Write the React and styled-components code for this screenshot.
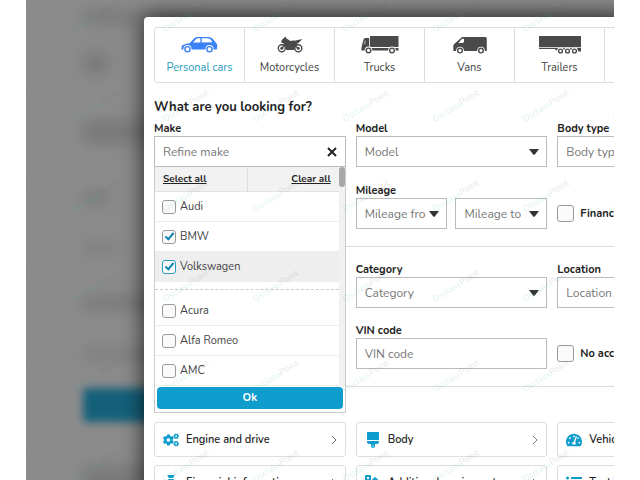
import { useState } from "react";
import styled, { createGlobalStyle, css } from "styled-components";
import {
  FaBrush,
  FaCogs,
  FaListUl,
  FaSwatchbook,
  FaTachometerAlt,
} from "react-icons/fa";
import { FaSackDollar } from "react-icons/fa6";

const Wheel = ({ cx, cy, r = 3 }) => (
  <g>
    <circle cx={cx} cy={cy} r={r + 0.8} fill="#fff" />
    <circle cx={cx} cy={cy} r={r - 0.7} fill="none" stroke="currentColor" strokeWidth="1.4" />
  </g>
);

const CarIcon = () => (
  <svg width="37" height="18" viewBox="0 0 37 18" fill="currentColor">
    <path d="M1 9.400C3 8.200 6 7.600 8.600 7.200L13 2.400C14.300 1.200 15.600 1 17.400 1h8.200c2.600 0 4.400.4 5.800 1.600L35 6.800c1 1.200 1.400 2.400 1.300 3.800l-.3 2.200c-.1.5-.5.7-1 .7H1.400C.6 13.500.4 13 .4 12.400z" />
    <path d="M12 6.600 15 3.300C15.600 2.600 16.200 2.300 17 2.300h2.400v4.300zM20.800 2.300h4.600c1.900 0 3.200.3 4.200 1.200l1.900 2.700-10.700.4z" fill="#fff" />
    <Wheel cx={6.500} cy={13.200} r={3.300} />
    <Wheel cx={28.500} cy={13.200} r={3.300} />
  </svg>
);

const MotorcycleIcon = () => (
  <svg width="26" height="18" viewBox="0 0 26 18" fill="currentColor">
    <path d="M4.600 4.200 7.400 1.400 8.800.6l.4 1.600 4.200 2.900c1.300-.7 2.600-.8 4-.3L25.400 3l-3.400 3.400-2 1.400 2 1.600-2.800 3.200-2 1.400H9.400L8.200 9.800 6 12.800 4.400 12 7 7.600 4.200 6.600z" />
    <circle cx="4.800" cy="12.200" r="3.500" fill="#fff" stroke="currentColor" strokeWidth="1.400" />
    <circle cx="4.800" cy="12.200" r="1.500" />
    <circle cx="21.300" cy="12.200" r="3.500" fill="#fff" stroke="currentColor" strokeWidth="1.400" />
    <circle cx="21.300" cy="12.200" r="1.500" />
    <path d="M8.200 6.500 5.300 12.500M17 9.500l4.300 2.700" stroke="currentColor" strokeWidth="1.400" />
  </svg>
);

const TruckIcon = () => (
  <svg width="38" height="18" viewBox="0 0 38 18" fill="currentColor">
    <path d="M9 0h28.500v11H9z" />
    <path d="M2.600 3.200C3 2.400 4 2 5 2h3.200v10h29.300v2.600H1C.4 14.600.2 14.200.3 13.600L.8 10z" />
    <path d="M2.500 8.400 3.400 4.400h1.800L4.400 8.400z" fill="#888" />
    <Wheel cx={7.500} cy={14.400} />
    <Wheel cx={31} cy={14.400} />
  </svg>
);

const VanIcon = () => (
  <svg width="34" height="18" viewBox="0 0 34 18" fill="currentColor">
    <path d="M8 2C8.500 1.300 9 1 10 1h22c1.200 0 1.800.6 1.800 1.800v11.400c0 .6-.4.900-1 .9H1.200C.6 15.100.3 14.800.3 14.200V10c0-.8.300-1.400.9-2z" />
    <path d="M5.400 7 9 2.800h2v3.400L9.200 7z" fill="#fff" />
    <Wheel cx={7} cy={14.600} />
    <Wheel cx={28} cy={14.600} />
  </svg>
);

const TrailerIcon = () => (
  <svg width="42" height="18" viewBox="0 0 42 18" fill="currentColor">
    <path d="M0 0h42v11.200H0zM0 12h42v1H0zM16 13h26v2.400h-2.400L38 14H18l-.6.800z" />
    <Wheel cx={21.500} cy={15} r={2.600} />
    <Wheel cx={28.500} cy={15} r={2.600} />
    <Wheel cx={35.500} cy={15} r={2.600} />
  </svg>
);

const CaretDown = () => (
  <svg width="10" height="6" viewBox="0 0 10 6" fill="#333">
    <path d="M0 0h10L6 5.200a1.300 1.300 0 0 1-2 0z" />
  </svg>
);

const ChevronRight = () => (
  <svg width="6" height="10" viewBox="0 0 6 10" fill="none" stroke="#777">
    <path d="M1 1l4 4-4 4" />
  </svg>
);

const CloseIcon = () => (
  <svg width="10" height="10" viewBox="0 0 10 10" stroke="#222" strokeWidth="2">
    <path d="M1 1l8 8M9 1L1 9" />
  </svg>
);

const categories = [
  { name: "Personal cars", icon: <CarIcon /> },
  { name: "Motorcycles", icon: <MotorcycleIcon /> },
  { name: "Trucks", icon: <TruckIcon /> },
  { name: "Vans", icon: <VanIcon /> },
  { name: "Trailers", icon: <TrailerIcon /> },
];

const topMakes = ["Audi", "BMW", "Volkswagen"];
const allMakes = ["Acura", "Alfa Romeo", "AMC"];

const groups = [
  { name: "Engine and drive", icon: <FaCogs /> },
  { name: "Body", icon: <FaBrush /> },
  { name: "Vehicle condition", icon: <FaTachometerAlt /> },
  { name: "Financial information", icon: <FaSackDollar /> },
  { name: "Additional equipment", icon: <FaSwatchbook /> },
  { name: "Text search", icon: <FaListUl /> },
];

function SelectField({ label, name }) {
  return (
    <Field>
      <Label htmlFor={name}>{label}</Label>
      <SelectBox id={name} text={label} />
    </Field>
  );
}

function SelectBox({ id, text, label }) {
  return (
    <SelectWrap>
      <Select id={id} aria-label={label}>
        <option>{text}</option>
      </Select>
      <Caret>
        <CaretDown />
      </Caret>
    </SelectWrap>
  );
}

function MakeField() {
  const [checked, setChecked] = useState(["BMW", "Volkswagen"]);

  const toggle = (make) =>
    setChecked(
      checked.includes(make)
        ? checked.filter((item) => item !== make)
        : [...checked, make]
    );

  const renderMake = (make) => (
    <MakeRow key={make} $active={make === "Volkswagen"}>
      <Checkbox
        type="checkbox"
        $active={make === "Volkswagen"}
        checked={checked.includes(make)}
        onChange={() => toggle(make)}
      />
      {make}
    </MakeRow>
  );

  return (
    <Field>
      <Label htmlFor="make">Make</Label>
      <MakeBox>
        <TextInput id="make" placeholder="Refine make" />
        <ClearButton type="button" aria-label="Close">
          <CloseIcon />
        </ClearButton>
        <Menu>
          <MenuBody>
            <MenuList>
              <MenuHead>
                <MenuLink
                  type="button"
                  onClick={() => setChecked([...topMakes, ...allMakes])}
                >
                  Select all
                </MenuLink>
                <MenuLink type="button" $right onClick={() => setChecked([])}>
                  Clear all
                </MenuLink>
              </MenuHead>
              {topMakes.map(renderMake)}
              <Separator />
              {allMakes.map(renderMake)}
            </MenuList>
            <ScrollTrack>
              <ScrollThumb />
            </ScrollTrack>
          </MenuBody>
          <OkButton type="button">Ok</OkButton>
        </Menu>
      </MakeBox>
    </Field>
  );
}

function Watermark() {
  return (
    <WatermarkLayer aria-hidden="true">
      <defs>
        <pattern id="mark" x="24" y="-30" width="90" height="90" patternUnits="userSpaceOnUse">
          <text x="45" y="49" textAnchor="middle" transform="rotate(-32 45 45)">
            <tspan fill="#1fb89a" fillOpacity="0.16">Osclass</tspan>
            <tspan fill="#555" fillOpacity="0.16">Point</tspan>
          </text>
        </pattern>
      </defs>
      <rect width="100%" height="100%" fill="url(#mark)" />
    </WatermarkLayer>
  );
}

function App() {
  return (
    <Page>
      <GlobalStyle />
      <Stage>
        <Backdrop>
          <Blob $height={14} $gap={28} />
          <Blob $height={22} $width={26} $gap={46} />
          <Blob $height={24} $gap={48} />
          <Blob $height={12} $width={26} $gap={40} />
          <Blob $height={8} $width={34} $gap={44} />
          <Blob $height={14} $gap={40} />
          <Blob $height={8} $gap={30} />
          <Blob $height={34} $gap={44} $accent />
          <Blob $height={24} />
        </Backdrop>
        <Modal>
          <Tabs>
            {categories.map((category, index) => (
              <Tab type="button" key={category.name} $active={index === 0}>
                <TabIcon $active={index === 0}>{category.icon}</TabIcon>
                {category.name}
              </Tab>
            ))}
          </Tabs>

          <Title>What are you looking for?</Title>

          <Section>
            <MakeField />
            <SelectField label="Model" name="model" />
            <SelectField label="Body type" name="body" />
            <Field />
            <Field>
              <Label htmlFor="mileage">Mileage</Label>
              <Pair>
                <SelectBox id="mileage" text="Mileage from" />
                <SelectBox text="Mileage to" label="Mileage to" />
              </Pair>
            </Field>
            <CheckField>
              <Checkbox type="checkbox" $large />
              Financing
            </CheckField>
          </Section>

          <Section $lower>
            <Field />
            <SelectField label="Category" name="category" />
            <Field>
              <Label htmlFor="location">Location</Label>
              <TextInput id="location" placeholder="Location" />
            </Field>
            <Field />
            <Field>
              <Label htmlFor="vin">VIN code</Label>
              <TextInput id="vin" placeholder="VIN code" />
            </Field>
            <CheckField>
              <Checkbox type="checkbox" $large />
              No accident
            </CheckField>
          </Section>

          <Groups>
            {groups.map((group) => (
              <GroupButton type="button" key={group.name}>
                <GroupIcon>{group.icon}</GroupIcon>
                <GroupName>{group.name}</GroupName>
                <ChevronRight />
              </GroupButton>
            ))}
          </Groups>
        </Modal>
        <Watermark />
      </Stage>
    </Page>
  );
}

export default App;

const GlobalStyle = createGlobalStyle`
  * {
    box-sizing: border-box;
  }
  body {
    margin: 0;
    background: #fff;
    color: #222;
    font-family: Nunito, Lato, "Open Sans", sans-serif;
    font-size: 11px;
    line-height: 16px;
  }
  button, input, select {
    font: inherit;
    color: inherit;
  }
`;

const Page = styled.div`
  padding: 0 26px;
`;
const Stage = styled.main`
  position: relative;
  display: flex;
  height: 100vh;
  padding: 17px 0 0 118px;
  overflow: hidden;
  background: #8b8b8b;
`;
const Backdrop = styled.div`
  position: absolute;
  inset: 0;
  padding: 10px 0 0 57px;
`;
const Blob = styled.div`
  width: ${(props) => (props.$width ? props.$width + "px" : "100%")};
  height: ${(props) => props.$height}px;
  margin-bottom: ${(props) => props.$gap || 0}px;
  border-radius: 4px;
  background: ${(props) => (props.$accent ? "#14607a" : "#7a7a7a")};
  filter: blur(${(props) => (props.$accent ? 4 : 7)}px);
`;
const Modal = styled.div`
  position: relative;
  flex: 1 0 615px;
  min-width: 0;
  height: max-content;
  padding: 10px;
  border-radius: 4px;
  background: #fff;
  box-shadow: 0 0 22px rgba(0, 0, 0, 0.75);
`;

const Tabs = styled.nav`
  display: flex;
  height: 56px;
  border: 1px solid #ddd;
  border-radius: 3px;
`;
const Tab = styled.button`
  flex: 0 0 90px;
  display: flex;
  flex-direction: column;
  align-items: center;
  padding: 8px 0 0;
  border: 0;
  border-right: 1px solid #ddd;
  background: none;
  white-space: nowrap;
  cursor: pointer;
  color: ${(props) => (props.$active ? "#2a9cc0" : "#444")};
`;
const TabIcon = styled.span`
  display: flex;
  height: 18px;
  margin-bottom: 6px;
  color: ${(props) => (props.$active ? "#3b82f6" : "#4a4a4a")};
`;

const Title = styled.h2`
  margin: 14px 0 3px;
  font-size: 13px;
  font-weight: 700;
  line-height: 20px;
`;

const Section = styled.section`
  display: grid;
  grid-template-columns: repeat(3, minmax(0, 1fr));
  gap: ${(props) => (props.$lower ? "14px 10px" : "15px 10px")};
  padding: ${(props) => (props.$lower ? "14px 0 17px" : "0 0 17px")};
  border-bottom: 1px solid #ddd;
`;
const Field = styled.div`
  min-width: 0;
`;
const Label = styled.label`
  display: block;
  padding-top: 2px;
  font-weight: 700;
  line-height: 14px;
`;
const control = css`
  display: block;
  width: 100%;
  height: 31px;
  border: 1px solid #bbb;
  border-radius: 0;
  background: #fff;
  color: #777;
  font-size: 12px;
  outline: 0;
`;
const TextInput = styled.input`
  ${control}
  padding: 0 8px;
  &::placeholder {
    color: #777;
    opacity: 1;
  }
`;
const SelectWrap = styled.div`
  position: relative;
  min-width: 0;
`;
const Select = styled.select`
  ${control}
  appearance: none;
  padding: 0 20px 0 8px;
`;
const Caret = styled.span`
  position: absolute;
  top: 13px;
  right: 8px;
  display: flex;
  pointer-events: none;
`;
const Pair = styled.div`
  display: grid;
  grid-template-columns: 1fr 1fr;
  gap: 8px;
`;
const CheckField = styled.label`
  display: flex;
  align-items: center;
  gap: 6px;
  height: 31px;
  align-self: end;
  font-weight: 700;
  white-space: nowrap;
`;
const Checkbox = styled.input`
  appearance: none;
  flex: none;
  display: grid;
  place-items: center;
  width: ${(props) => (props.$large ? 17 : 14)}px;
  height: ${(props) => (props.$large ? 17 : 14)}px;
  margin: 0;
  border: 1px solid ${(props) => (props.$active ? "#2a9cc0" : "#999")};
  border-radius: 3px;
  background: #fafafa;
  &:checked::before {
    content: "";
    width: 3px;
    height: 7px;
    margin-bottom: 2px;
    border: solid #0e86b4;
    border-width: 0 2px 2px 0;
    transform: rotate(40deg);
  }
`;

const MakeBox = styled.div`
  position: relative;
`;
const ClearButton = styled.button`
  position: absolute;
  top: 11px;
  right: 9px;
  display: flex;
  padding: 0;
  border: 0;
  background: none;
  cursor: pointer;
`;
const Menu = styled.div`
  position: absolute;
  z-index: 1;
  top: 100%;
  left: 0;
  width: 100%;
  padding-bottom: 3px;
  border: 1px solid #ccc;
  border-top: 0;
  background: #fff;
`;
const MenuBody = styled.div`
  display: flex;
`;
const MenuList = styled.div`
  flex: 1;
`;
const MenuHead = styled.div`
  display: grid;
  grid-template-columns: 1fr 1fr;
  height: 25px;
  border-bottom: 1px solid #e2e2e2;
  background: #f2f2f2;
`;
const MenuLink = styled.button`
  padding: 0 8px;
  border: 0;
  background: none;
  font-size: 10px;
  font-weight: 700;
  text-decoration: underline;
  text-align: ${(props) => (props.$right ? "right" : "left")};
  border-left: ${(props) => (props.$right ? "1px solid #ddd" : "0")};
  cursor: pointer;
`;
const MakeRow = styled.label`
  display: flex;
  align-items: center;
  gap: 4px;
  height: 30px;
  padding-left: 7px;
  border-bottom: 1px solid #eee;
  color: #444;
  background: ${(props) => (props.$active ? "#eee" : "#fff")};
`;
const Separator = styled.hr`
  margin: 7px 0 6px;
  border: 0;
  border-top: 1px dashed #ccc;
`;
const ScrollTrack = styled.div`
  width: 6px;
  background: #f1f1f1;
`;
const ScrollThumb = styled.div`
  height: 20px;
  border-radius: 3px;
  background: #a8a8a8;
`;
const OkButton = styled.button`
  display: block;
  width: calc(100% - 4px);
  height: 22px;
  margin: 1px auto 0;
  padding: 0;
  border: 0;
  border-radius: 4px;
  background: #0f9dcd;
  color: #fff;
  font-weight: 700;
  cursor: pointer;
`;

const Groups = styled.div`
  display: grid;
  grid-template-columns: repeat(3, minmax(0, 1fr));
  gap: 8px 10px;
  padding-top: 35px;
`;
const GroupButton = styled.button`
  display: flex;
  align-items: center;
  gap: 7px;
  height: 35px;
  padding: 0 8px;
  border: 1px solid #ddd;
  border-radius: 3px;
  background: #fff;
  cursor: pointer;
`;
const GroupIcon = styled.span`
  display: flex;
  justify-content: center;
  width: 16px;
  color: #0f9dcd;
  font-size: 16px;
`;
const GroupName = styled.span`
  flex: 1;
  font-weight: 600;
  text-align: left;
  white-space: nowrap;
`;

const WatermarkLayer = styled.svg`
  position: absolute;
  z-index: 2;
  inset: 0;
  width: 100%;
  height: 100%;
  pointer-events: none;
  font-size: 9px;
`;
